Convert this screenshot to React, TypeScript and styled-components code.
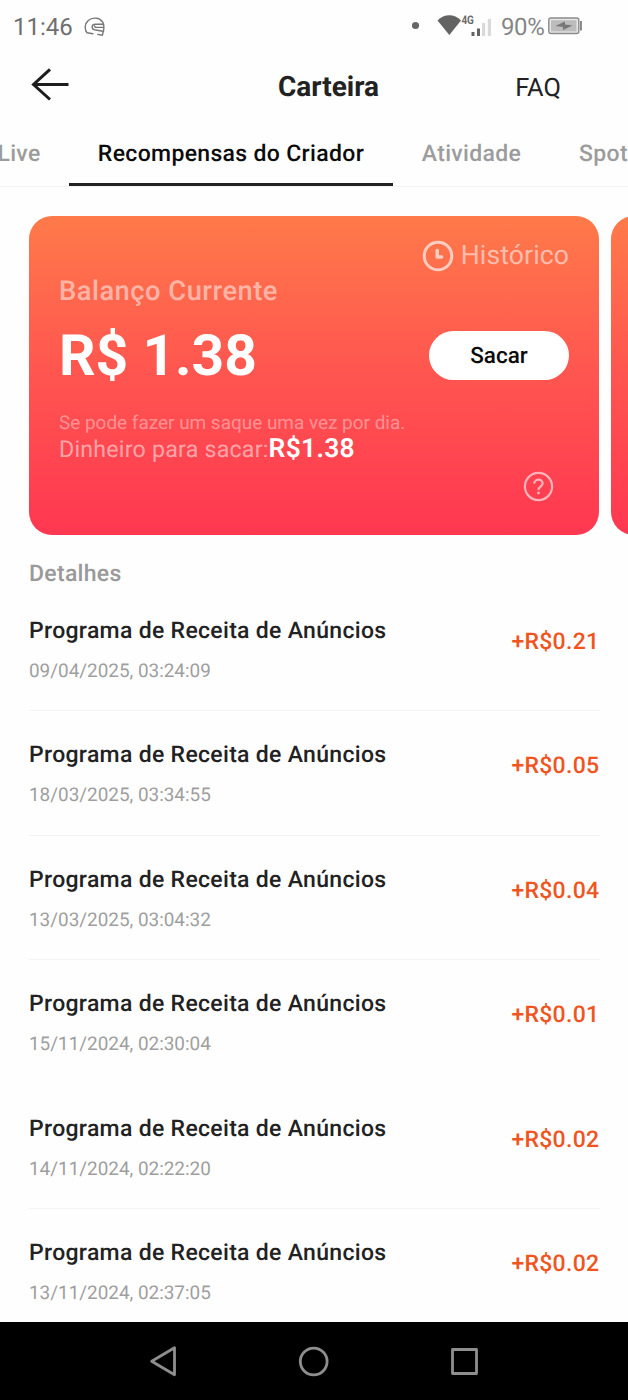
import React from "react";
import styled, { createGlobalStyle } from "styled-components";

const GlobalStyle = createGlobalStyle`
  * { box-sizing: border-box; }
  body { margin: 0; background: #fefefe; font-family: Roboto, sans-serif; text-rendering: geometricPrecision; }
`;

const Screen = styled.div`
  display: flex;
  flex-direction: column;
  width: 628px;
  height: 1400px;
  overflow: hidden;
  background: #fefefe;
  white-space: nowrap;
`;

const StatusBar = styled.header`
  display: flex;
  align-items: center;
  justify-content: space-between;
  height: 54px;
  flex: none;
  padding: 0 46px 0 13px;
  color: #6f6f6f;
  font-size: 24px;
  line-height: 56px;
`;

const StatusGroup = styled.div`
  display: flex;
  align-items: center;
  height: 54px;
`;

const Clock = styled.span`
  width: 71px;
`;

const Battery = styled.span`
  margin-left: 5px;
  width: 47px;
  color: #868686;
  letter-spacing: -0.4px;
`;

const Header = styled.nav`
  display: grid;
  grid-template-columns: 243px 111px 1fr;
  align-items: center;
  height: 66px;
  flex: none;
  padding: 0 67px 0 30px;
  color: #222;
`;

const HeaderTitle = styled.h1`
  margin: 0;
  font-size: 28px;
  font-weight: 700;
  line-height: 66px;
  height: 66px;
  text-align: center;
`;

const FaqLink = styled.span`
  justify-self: end;
  height: 66px;
  font-size: 25.4px;
  line-height: 68px;
`;

const Tabs = styled.div`
  display: flex;
  height: 67px;
  flex: none;
  border-bottom: 1px solid #f3f3f3;
`;

const TabStrip = styled.div`
  display: flex;
  margin-left: -31px;
  height: 66px;
`;

const Tab = styled.div<{ $active?: boolean; $width: number }>`
  flex: none;
  width: ${(p) => p.$width}px;
  height: 66px;
  text-align: center;
  font-size: 23px;
  font-weight: 500;
  line-height: 68px;
  letter-spacing: 0.33px;
  color: ${(p) => (p.$active ? "#0c0c0c" : "#9c9c9c")};
  border-bottom: ${(p) => (p.$active ? "3px solid #222" : "0")};
`;

const Carousel = styled.section`
  display: flex;
  gap: 12px;
  flex: none;
  padding: 29.4px 0 0 29px;
  overflow: hidden;
`;

const Card = styled.div`
  display: flex;
  flex-direction: column;
  flex: none;
  width: 570px;
  height: 318.6px;
  padding: 24.6px 30px 0 30px;
  border-radius: 23px;
  background: linear-gradient(#ff7a4a, #ff5550 50%, #ff3751);
  color: #fff;
`;

const HistoryLink = styled.div`
  display: flex;
  align-items: center;
  justify-content: flex-end;
  gap: 7px;
  height: 30px;
  font-size: 26.6px;
  letter-spacing: 0.1px;
  line-height: 28px;
  color: rgba(255, 255, 255, 0.55);
`;

const BalanceLabel = styled.div`
  height: 34px;
  margin-top: 3px;
  font-size: 27.3px;
  font-weight: 500;
  line-height: 34px;
  letter-spacing: 0.5px;
  color: rgba(255, 255, 255, 0.52);
`;

const BalanceRow = styled.div`
  display: flex;
  align-items: center;
  justify-content: space-between;
  height: 70px;
  margin-top: 13px;
`;

const Balance = styled.strong`
  font-size: 57px;
  font-weight: 700;
  line-height: 70px;
`;

const WithdrawButton = styled.button`
  width: 140px;
  height: 49px;
  margin-top: -1px;
  padding: 0;
  border: 0;
  border-radius: 25px;
  background: #fff;
  color: #0c0c0c;
  font: 500 22.5px/50px Roboto, sans-serif;
  text-rendering: geometricPrecision;
`;

const Limit = styled.div`
  height: 26px;
  margin-top: 19px;
  font-size: 18.95px;
  line-height: 26px;
  color: rgba(255, 255, 255, 0.4);
`;

const Available = styled.div`
  display: flex;
  align-items: baseline;
  height: 30px;
  font-size: 23.2px;
  letter-spacing: 0.22px;
  line-height: 26px;
  color: rgba(255, 255, 255, 0.52);
`;

const AvailableValue = styled.strong`
  font-size: 26.4px;
  font-weight: 600;
  letter-spacing: 0.3px;
  color: #fff;
`;

const HelpRow = styled.div`
  display: flex;
  justify-content: flex-end;
  margin-top: 5px;
  padding-right: 15px;
`;

const Details = styled.main`
  flex: 1;
  min-height: 0;
  overflow: hidden;
  padding: 24px 28px 0 29px;
`;

const SectionTitle = styled.h2`
  margin: 0;
  height: 28px;
  font-size: 23px;
  font-weight: 500;
  line-height: 30px;
  letter-spacing: 0.3px;
  color: #999;
`;

const Entry = styled.article<{ $divider: boolean }>`
  display: flex;
  justify-content: space-between;
  height: 124.4px;
  padding-top: 29px;
  border-bottom: 1px solid ${(p) => (p.$divider ? "#f3f3f3" : "transparent")};
`;

const EntryTitle = styled.div`
  height: 30px;
  font-size: 23px;
  font-weight: 500;
  line-height: 30px;
  letter-spacing: 0.31px;
  color: #222;
`;

const EntryDate = styled.div`
  margin-top: 10px;
  height: 30px;
  font-size: 18.9px;
  line-height: 30px;
  color: #9e9e9e;
`;

const Amount = styled.div`
  padding: 11px 0.6px 0 0;
  font-size: 23px;
  font-weight: 500;
  line-height: 30px;
  letter-spacing: 0.3px;
  color: #f0551f;
`;

const NavBar = styled.footer`
  display: flex;
  align-items: center;
  justify-content: space-between;
  height: 78px;
  flex: none;
  padding: 0 148px;
  background: #000;
`;

const entries = [
  { date: "09/04/2025, 03:24:09", amount: "+R$0.21" },
  { date: "18/03/2025, 03:34:55", amount: "+R$0.05" },
  { date: "13/03/2025, 03:04:32", amount: "+R$0.04" },
  { date: "15/11/2024, 02:30:04", amount: "+R$0.01", noDivider: true },
  { date: "14/11/2024, 02:22:20", amount: "+R$0.02" },
  { date: "13/11/2024, 02:37:05", amount: "+R$0.02" },
];

const HelmetIcon = () => (
  <svg width="22" height="20" viewBox="0 0 22 20" fill="none" stroke="#777" strokeWidth="1.4" strokeLinecap="round" strokeLinejoin="round">
    <path d="M8.800 16.800L3 15.800C.4 12.500 .6 6.500 4.200 3.600C8.500-.2 15.500.6 18.300 4.500C20.400 7.500 20 13.500 18.300 18.300L13.800 17.400" />
    <path d="M19.200 7.300H11.500C7.200 7.300 7.200 12 10.500 12.800L18.800 14.200M19.200 10.400H11.300L10.600 9.200" />
  </svg>
);

const SignalIcons = () => (
  <svg width="84" height="30" viewBox="0 0 84 30">
    <circle cx="3.500" cy="13.500" r="3.600" fill="#666" />
    <path d="M25.500 8.500C32 1.500 42.500 1.500 49 8.500L37.300 23Z" fill="#636363" />
    <text x="49.400" y="11.800" fontFamily="Roboto, sans-serif" fontSize="11.800" fontWeight="700" fill="#6a6a6a" textLength="12.500" lengthAdjust="spacingAndGlyphs">4G</text>
    <path d="M59.500 20h3v4h-3zM65 16.500h3v7.500h-3z" fill="#626262" />
    <path d="M70 11h3.200v13h-3.200zM75.800 7h3.200v17h-3.200z" fill="#d9d9d9" />
  </svg>
);

const BatteryIcon = () => (
  <svg width="34" height="18" viewBox="0 0 34 18" style={{ marginTop: -2 }}>
    <rect x=".8" y="1" width="30" height="15.500" rx="2" fill="#e6e6e6" stroke="#8b8b8b" strokeWidth="1.400" />
    <rect x="3" y="3.200" width="25.500" height="11.200" fill="#bcbcbc" />
    <path d="M7.500 9L17 4.500V7.500L24.500 8.500L15 13V10Z" fill="#777" />
    <rect x="32" y="4" width="1.900" height="9.500" fill="#858585" />
  </svg>
);

const BackIcon = () => (
  <svg width="40" height="34" viewBox="0 0 40 34" fill="none" stroke="#1d1d1d" strokeWidth="3" style={{ marginTop: -4 }}>
    <path d="M38.500 16.500H3M20 1.300L3.500 16.500L20 31.500" />
  </svg>
);

const HistoryIcon = () => (
  <svg width="32" height="32" viewBox="0 0 32 32" fill="none" stroke="#fff" opacity=".65">
    <circle cx="16" cy="16" r="13.800" strokeWidth="3" />
    <path d="M15.200 10.500V17H19.600" strokeWidth="3.500" strokeLinecap="round" strokeLinejoin="round" />
  </svg>
);

const HelpIcon = () => (
  <svg width="31" height="31" viewBox="0 0 31 31" fill="none" stroke="#fff" strokeWidth="2.200" opacity=".6">
    <circle cx="15.500" cy="15.500" r="13.600" />
    <path d="M11.200 12.800C11.200 7.300 19.800 7.400 19.600 12.600C19.500 15.300 15.500 15.600 15.500 19" />
    <circle cx="15.500" cy="22" r="1.400" fill="#fff" stroke="none" />
  </svg>
);

export default function App() {
  return (
    <Screen>
      <GlobalStyle />
      <StatusBar>
        <StatusGroup>
          <Clock>11:46</Clock>
          <HelmetIcon />
        </StatusGroup>
        <StatusGroup>
          <SignalIcons />
          <Battery>90%</Battery>
          <BatteryIcon />
        </StatusGroup>
      </StatusBar>
      <Header>
        <BackIcon />
        <HeaderTitle>Carteira</HeaderTitle>
        <FaqLink>FAQ</FaqLink>
      </Header>
      <Tabs>
        <TabStrip>
          <Tab $width={100}>Live</Tab>
          <Tab $width={324} $active>Recompensas do Criador</Tab>
          <Tab $width={157}>Atividade</Tab>
          <Tab $width={107}>Spot</Tab>
        </TabStrip>
      </Tabs>
      <Carousel>
        <Card>
          <HistoryLink>
            <HistoryIcon />
            Histórico
          </HistoryLink>
          <BalanceLabel>Balanço Currente</BalanceLabel>
          <BalanceRow>
            <Balance>R$ 1.38</Balance>
            <WithdrawButton>Sacar</WithdrawButton>
          </BalanceRow>
          <Limit>Se pode fazer um saque uma vez por dia.</Limit>
          <Available>
            Dinheiro para sacar:<AvailableValue>R$1.38</AvailableValue>
          </Available>
          <HelpRow>
            <HelpIcon />
          </HelpRow>
        </Card>
        <Card />
      </Carousel>
      <Details>
        <SectionTitle>Detalhes</SectionTitle>
        {entries.map((entry) => (
          <Entry key={entry.date} $divider={!entry.noDivider}>
            <div>
              <EntryTitle>Programa de Receita de Anúncios</EntryTitle>
              <EntryDate>{entry.date}</EntryDate>
            </div>
            <Amount>{entry.amount}</Amount>
          </Entry>
        ))}
      </Details>
      <NavBar>
        <svg width="30" height="34" viewBox="0 0 30 34" fill="none" stroke="#8e8e8e" strokeWidth="2.800" strokeLinejoin="round">
          <path d="M26.500 3.800V30.800L3.700 17.300Z" />
        </svg>
        <svg width="32" height="32" viewBox="0 0 32 32" fill="none" stroke="#8e8e8e" strokeWidth="2.800">
          <circle cx="15.700" cy="16.500" r="13.400" />
        </svg>
        <svg width="30" height="30" viewBox="0 0 30 30" fill="none" stroke="#8e8e8e" strokeWidth="2.800" strokeLinejoin="round">
          <rect x="2.500" y="3.500" width="24" height="24" />
        </svg>
      </NavBar>
    </Screen>
  );
}
